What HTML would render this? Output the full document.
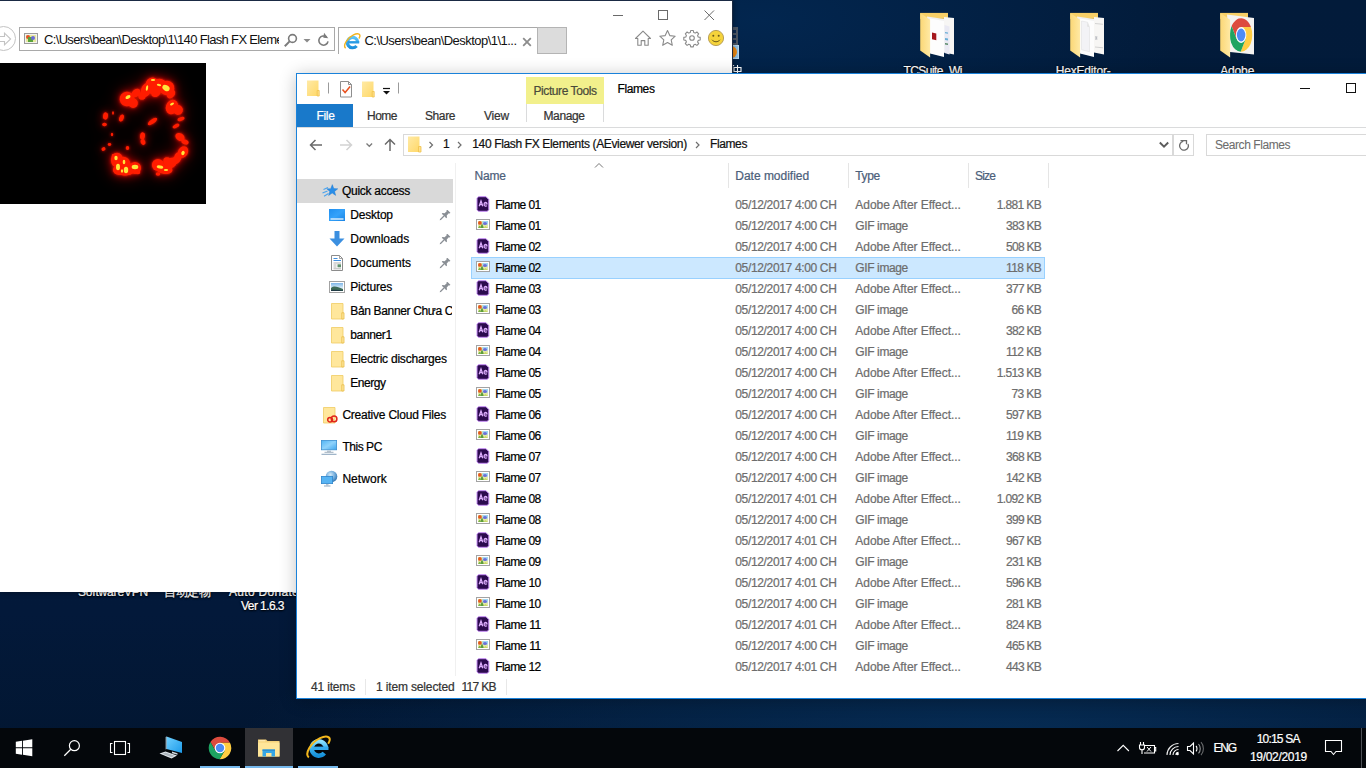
<!DOCTYPE html>
<html><head>
<meta charset="utf-8">
<title>Desktop</title>
<style>
*{box-sizing:border-box;margin:0;padding:0}
html,body{width:1366px;height:768px;overflow:hidden}
body{font-family:"Liberation Sans",sans-serif;font-size:12px;color:#000;position:relative;
 background:#05193a;}
.abs{position:absolute}
.t{position:absolute;white-space:nowrap;line-height:14px;height:14px;-webkit-text-stroke:.22px currentColor}
#desk{position:absolute;left:0;top:0;width:1366px;height:768px;
 background:
  radial-gradient(ellipse 420px 160px at 760px 20px,#02264f 0%,rgba(2,38,79,0) 100%),
  radial-gradient(ellipse 760px 130px at 1000px 735px,#062c54 0%,rgba(6,44,84,0) 100%),
  linear-gradient(180deg,#021b3a 0%,#031b3b 40%,#03193a 80%,#021630 100%);}
/* IE window */
#ie{position:absolute;left:0;top:0;width:733px;height:592px;background:#fff;border-top:1px solid #1a2a44;border-right:1px solid #1c2b42;box-shadow:0 0 6px rgba(0,0,0,.4)}
/* Explorer */
#ex{position:absolute;left:296px;top:73px;width:1080px;height:626px;background:#fff;border:1px solid #1a82da;
 box-shadow:0 2px 16px rgba(0,0,0,.24)}
/* taskbar */
#tb{position:absolute;left:0;top:728px;width:1366px;height:40px;background:#04070b}
.dl{color:#fff;text-shadow:0 1px 2px #000,0 0 2px #000}
</style>
</head>
<body>
<div id="desk">
 <div class="abs" style="left:732px;top:27px;width:6px;height:18px;background:#4d5866"></div>
 <div class="abs" style="left:732px;top:30px;width:4px;height:3px;background:#0b2a52"></div><div class="abs" style="left:732px;top:35px;width:4px;height:3px;background:#0b2a52"></div><div class="abs" style="left:732px;top:40px;width:4px;height:3px;background:#0b2a52"></div>
 <div class="abs" style="left:732px;top:45px;width:7px;height:14px;background:#8fc1e6;border:1px solid #b4d6ef;border-left:0"></div>
 <div class="abs" style="left:725px;top:46px;width:12px;height:12px;border-radius:50%;background:#ee8a12"></div>
 <div class="abs" style="left:733px;top:65px;width:9px;height:8px;overflow:hidden"><svg width="9" height="12" viewBox="0 0 9 12"><path d="M1 2.500h7v4H1zM4.500 0v11M0 1l1-1" fill="none" stroke="#fff" stroke-width="1.100"></path></svg></div>
<svg class="abs" style="left:920px;top:12px" width="36" height="48" viewBox="0 0 36 48">
     <defs><linearGradient id="dftc" x1="0" y1="0" x2="1" y2="0"><stop offset="0" stop-color="#fbd776"></stop><stop offset="1" stop-color="#ffe9a4"></stop></linearGradient></defs>
     <path d="M.200 .900H28v6H.200z" fill="#f7cf67"></path>
     <path d="M7 4.500L24 7v36.500L10 40z" fill="#f1f1f1"></path><path d="M24 5l10 1v36.500L24 40.500z" fill="#f7f6f4"></path><path d="M24.500 13l5 1.500v28l-5-1.500z" fill="#e9e9f3"></path><path d="M25 20l3 .6v1.200l-3-.600zM25 26l3 .6v2l-3-.600z" fill="#6aaed6"></path><path d="M25 31l3 .6v1.500l-3-.600z" fill="#5a8a6a"></path>
        <path d="M10 6.500L24 9v36L10 41.500z" fill="#fdfdfd"></path><path d="M12 20.500l4.300 1v6.800l-4.300-1z" fill="#a5171c"></path>
     <path d="M.200 .900L10.100 7.800v37.600L.200 38.500z" fill="url(#dftc)"></path></svg><svg class="abs" style="left:1070px;top:12px" width="36" height="48" viewBox="0 0 36 48">
     <defs><linearGradient id="dfhex" x1="0" y1="0" x2="1" y2="0"><stop offset="0" stop-color="#fbd776"></stop><stop offset="1" stop-color="#ffe9a4"></stop></linearGradient></defs>
     <path d="M.200 .900H28v6H.200z" fill="#f7cf67"></path>
     <path d="M7 4.500L24 7v36.500L10 40z" fill="#f1f1f1"></path><path d="M24 5l10 1v36.500L24 40.500z" fill="#f7f6f4"></path><path d="M25 11.500l8 .800M25 35l8 .800" stroke="#c9c9c9" stroke-width=".8" fill="none"></path><path d="M25.500 24l1.500 4M27 24l-1.500 4M25 26h2.500" stroke="#b5b8bd" stroke-width=".7" fill="none"></path>
        <path d="M10 6.500L24 9v36L10 41.500z" fill="#fdfdfd"></path><path d="M11.500 9l6 1.200 2 5v24.500l-8-2z" fill="#f3f3f6" stroke="#dcdcdc" stroke-width=".5"></path><path d="M17.500 10.200l-.500 4.300 2.500 .700z" fill="#e3e3e3"></path>
     <path d="M.200 .900L10.100 7.800v37.600L.200 38.500z" fill="url(#dfhex)"></path></svg><svg class="abs" style="left:1220px;top:12px" width="36" height="48" viewBox="0 0 36 48">
     <defs><linearGradient id="dfch" x1="0" y1="0" x2="1" y2="0"><stop offset="0" stop-color="#fbd776"></stop><stop offset="1" stop-color="#ffe9a4"></stop></linearGradient></defs>
     <path d="M.200 .900H28v6H.200z" fill="#f7cf67"></path>
     <path d="M7 2.500L34 6v36.500L10 40z" fill="#f4f3f1"></path>
        <g transform="translate(21.100 23) scale(.99 1.490)"><circle r="11.300" fill="#fff"></circle>
        <path d="M0 -5.300L9.980 -5.300A11.300 11.300 0 0 0 -9.580 -5.990L-4.590 2.650L0 0Z" fill="#dd4b3e"></path>
        <path d="M4.590 2.650L-.400 11.290A11.300 11.300 0 0 0 9.980 -5.300L0 -5.300L0 0Z" fill="#ffcd42"></path>
        <path d="M-4.590 2.650L-9.580 -5.990A11.300 11.300 0 0 0 -.400 11.290L4.590 2.650L0 0Z" fill="#1da462"></path>
        <circle r="5.300" fill="#fff"></circle><circle r="4.300" fill="#4c8bf5"></circle></g>
     <path d="M.200 .900L10.100 7.800v37.600L.200 38.500z" fill="url(#dfch)"></path></svg>
 <div class="t dl" style="left: 903.4px; top: 64px; letter-spacing: -0.542px;">TCSuite_Wi</div>
 <div class="t dl" style="left: 1055.8px; top: 64px; letter-spacing: -0.199px;">HexEditor-</div>
 <div class="t dl" style="left: 1220.2px; top: 64px; letter-spacing: -0.141px;">Adobe</div>
 <div class="t dl" style="left: 78px; top: 584.5px; letter-spacing: -0.185px;">SoftwareVPN</div>
 <div class="t dl" style="left: 164px; top: 584.5px; letter-spacing: -0.5px;">自动定物</div>
 <div class="t dl" style="left: 229px; top: 584.5px; letter-spacing: 0.298px;">Auto Donate</div>
 <div class="t dl" style="left: 241px; top: 598.6px; letter-spacing: -0.561px;">Ver 1.6.3</div>
</div>

<!-- IE WINDOW -->
<div id="ie">
 <!-- window controls -->
 <svg class="abs" style="left:600px;top:-1px" width="132" height="30" viewBox="0 0 132 30">
  <g fill="none" stroke="#6a6a6a" stroke-width="1">
   <path d="M13 15.5h10"></path>
   <rect x="58.5" y="10.5" width="9" height="9"></rect>
   <path d="M104.5 10.5l9.5 9.5M114 10.5l-9.5 9.5"></path>
  </g>
 </svg>
 <!-- fwd button -->
 <div class="abs" style="left:-9px;top:25px;width:25px;height:25px;border:1px solid #c3c3c3;border-radius:50%"></div>
 <svg class="abs" style="left:0;top:31px" width="12" height="14" viewBox="0 0 12 14"><path d="M-2 4.5h6.5V1.2L10.6 7 4.5 12.8V9.5H-2" fill="none" stroke="#c3c3c3" stroke-width="1.1"></path></svg>
 <!-- address box -->
 <div class="abs" style="left:19px;top:26px;width:316px;height:24px;border:1px solid #a9a9a9;background:#fff"></div>
 <div class="abs" style="left:24px;top:32px;width:14px;height:11px;border:1px solid #9a9a9a;background:#f4f4f0;overflow:hidden">
   <div class="abs" style="left:1px;top:1px;width:10px;height:7px;background:#e8e8a0"></div>
   <div class="abs" style="left:1px;top:1px;width:4px;height:4px;border-radius:50%;background:#e2522a"></div>
   <div class="abs" style="left:3px;top:3px;width:5px;height:5px;background:#5aa33c"></div>
   <div class="abs" style="left:6px;top:2px;width:4px;height:4px;border-radius:50%;background:#6a6bd8"></div>
 </div>
 <div class="t" id="ieurl" style="-webkit-text-stroke:0;left:44px;top:31px;width:235px;overflow:hidden;letter-spacing:-0.66px;font-size:13px;line-height:16px;height:16px;color:#111">C:\Users\bean\Desktop\1\140 Flash FX Elements</div>
 <svg class="abs" style="left:283px;top:31px" width="50" height="16" viewBox="0 0 50 16">
  <circle cx="9.5" cy="6.5" r="3.9" fill="none" stroke="#7b7b7b" stroke-width="1.6"></circle>
  <path d="M6.6 9.4L1.8 14.2" stroke="#7b7b7b" stroke-width="2" fill="none"></path>
  <path d="M20.5 7h7l-3.5 3.5z" fill="#8a8a8a"></path>
  <path d="M43.6 5.2A4.6 4.6 0 1 0 45 9.3" fill="none" stroke="#7b7b7b" stroke-width="1.6"></path>
  <path d="M40.6 1v5h5z" fill="#7b7b7b" transform="rotate(8 43 4)"></path>
 </svg>
 <!-- tab -->
 <div class="abs" style="left:338px;top:26px;width:200px;height:27px;border:1px solid #a9a9a9;border-bottom:0;border-right:0;background:#fff"></div>
 <div class="abs" style="left:537px;top:26px;width:30px;height:27px;border:1px solid #b4b4b4;background:#dcdcdc"></div>
 <svg class="abs" style="left:343px;top:31px" width="18" height="18" viewBox="0 0 18 18"><defs><linearGradient id="ie1" x1="0" y1="0" x2="0" y2="1"><stop offset="0" stop-color="#5cc4f6"></stop><stop offset="1" stop-color="#1b8fdc"></stop></linearGradient></defs>
  <path d="M14.800 10.300A5.200 5.200 0 1 0 13.600 13.900" fill="none" stroke="url(#ie1)" stroke-width="3.200"></path><path d="M4.600 10.300h11.600" stroke="#2a9be4" stroke-width="2.400" fill="none"></path>
  <path d="M2.600 16.200C-.500 13.500 4.500 5.500 10.500 2.800 14.500 1 17.300 1.800 16.900 4.200c-.100.800-.500 1.600-1 2.300" fill="none" stroke="#f3b31c" stroke-width="1.400"></path></svg>
 <div class="t" id="ietab" style="-webkit-text-stroke: 0px; left: 364.5px; top: 32px; font-size: 13px; line-height: 16px; height: 16px; color: rgb(17, 17, 17); letter-spacing: -0.533px;">C:\Users\bean\Desktop\1\1...</div>
 <svg class="abs" style="left:522px;top:36px" width="10" height="10" viewBox="0 0 10 10"><path d="M1.200 1.200l7.600 7.600M8.800 1.200L1.200 8.800" stroke="#8c8c8c" stroke-width="1.800" fill="none"></path></svg>
 <!-- right icons -->
 <svg class="abs" style="left:632px;top:27px" width="96" height="20" viewBox="0 0 96 20">
  <g fill="none" stroke="#8a8a8a" stroke-width="1.100" stroke-linejoin="round">
   <path d="M3.500 10.500L11 3.200l7.500 7.300h-2.300v6.700h-3.400v-4.600H9.200v4.600H5.800v-6.700z"></path>
   <path d="M35.500 2.600l2.300 5 5.400.6-4 3.700 1.100 5.400-4.800-2.700-4.800 2.700 1.100-5.400-4-3.700 5.400-.6z"></path>
   <circle cx="60" cy="10" r="2.300"></circle>
   <path d="M58.700 2.500h2.600l.4 2 1.500.6 1.700-1.100 1.800 1.800-1.100 1.700.6 1.500 2 .4v2.600l-2 .4-.6 1.500 1.100 1.700-1.800 1.800-1.700-1.100-1.500.6-.4 2h-2.600l-.4-2-1.500-.6-1.700 1.100-1.800-1.800 1.100-1.700-.6-1.500-2-.4v-2.600l2-.4.6-1.500-1.100-1.700 1.800-1.800 1.700 1.100 1.500-.6z"></path>
  </g>
  <circle cx="84" cy="10" r="7.600" fill="#f5d33b" stroke="#b9a05a" stroke-width="1"></circle>
  <circle cx="81.300" cy="7.800" r="1" fill="#6b5a1a"></circle><circle cx="86.700" cy="7.800" r="1" fill="#6b5a1a"></circle>
  <path d="M80 11.800c2 2.600 6 2.600 8 0" fill="none" stroke="#6b5a1a" stroke-width="1"></path>
 </svg>
 <!-- image -->
 <div class="abs" id="flame" style="left:0;top:62px;width:206px;height:141px;background:#000;overflow:hidden"><svg class="abs" style="left:0;top:0" width="206" height="141" viewBox="0 0 206 141">
<defs><filter id="b1" x="-50%" y="-50%" width="200%" height="200%"><feGaussianBlur stdDeviation="4"></feGaussianBlur></filter><filter id="b2" x="-50%" y="-50%" width="200%" height="200%"><feGaussianBlur stdDeviation="1.800"></feGaussianBlur></filter><filter id="b0" x="-50%" y="-50%" width="200%" height="200%"><feGaussianBlur stdDeviation="9"></feGaussianBlur></filter><filter id="b3"><feGaussianBlur stdDeviation=".45"></feGaussianBlur></filter></defs>
<g filter="url(#b0)" opacity=".55"><ellipse cx="127" cy="36" rx="7.32" ry="7.32" fill="#c80a00" transform="rotate(-30 127 36)"></ellipse><ellipse cx="133" cy="40" rx="4.88" ry="4.88" fill="#c80a00" transform="rotate(20 133 40)"></ellipse><ellipse cx="136" cy="30" rx="4.88" ry="3.66" fill="#c80a00" transform="rotate(-40 136 30)"></ellipse><ellipse cx="146" cy="27" rx="4.88" ry="7.32" fill="#c80a00" transform="rotate(20 146 27)"></ellipse><ellipse cx="153" cy="23" rx="7.32" ry="8.54" fill="#c80a00" transform="rotate(-20 153 23)"></ellipse><ellipse cx="160" cy="22" rx="7.32" ry="6.10" fill="#c80a00" transform="rotate(10 160 22)"></ellipse><ellipse cx="167" cy="25" rx="7.32" ry="7.32" fill="#c80a00" transform="rotate(30 167 25)"></ellipse><ellipse cx="171" cy="31" rx="3.66" ry="4.88" fill="#c80a00" transform="rotate(40 171 31)"></ellipse><ellipse cx="156" cy="30" rx="4.88" ry="3.66" fill="#c80a00" transform="rotate(-30 156 30)"></ellipse><ellipse cx="142" cy="33" rx="3.66" ry="3.66" fill="#c80a00" transform="rotate(0 142 33)"></ellipse><ellipse cx="172" cy="44" rx="6.10" ry="7.32" fill="#c80a00" transform="rotate(20 172 44)"></ellipse><ellipse cx="178" cy="47" rx="4.88" ry="4.88" fill="#c80a00" transform="rotate(40 178 47)"></ellipse><ellipse cx="181" cy="56" rx="3.66" ry="1.83" fill="#c80a00" transform="rotate(-20 181 56)"></ellipse><ellipse cx="176" cy="63" rx="3.66" ry="1.83" fill="#c80a00" transform="rotate(-30 176 63)"></ellipse><ellipse cx="180" cy="74" rx="4.88" ry="3.66" fill="#c80a00" transform="rotate(30 180 74)"></ellipse><ellipse cx="185" cy="79" rx="3.66" ry="2.44" fill="#c80a00" transform="rotate(20 185 79)"></ellipse><ellipse cx="183" cy="89" rx="4.88" ry="6.10" fill="#c80a00" transform="rotate(30 183 89)"></ellipse><ellipse cx="178" cy="94" rx="3.66" ry="4.88" fill="#c80a00" transform="rotate(20 178 94)"></ellipse><ellipse cx="158" cy="102" rx="6.10" ry="6.10" fill="#c80a00" transform="rotate(0 158 102)"></ellipse><ellipse cx="164" cy="106" rx="8.54" ry="4.88" fill="#c80a00" transform="rotate(10 164 106)"></ellipse><ellipse cx="171" cy="100" rx="6.10" ry="4.88" fill="#c80a00" transform="rotate(-30 171 100)"></ellipse><ellipse cx="176" cy="97" rx="4.88" ry="3.66" fill="#c80a00" transform="rotate(-30 176 97)"></ellipse><ellipse cx="158" cy="111" rx="2.30" ry="1.72" fill="#c80a00" transform="rotate(0 158 111)"></ellipse><ellipse cx="167" cy="98" rx="3.66" ry="3.66" fill="#c80a00" transform="rotate(0 167 98)"></ellipse><ellipse cx="117" cy="97" rx="6.10" ry="7.32" fill="#c80a00" transform="rotate(0 117 97)"></ellipse><ellipse cx="123" cy="101" rx="7.32" ry="7.32" fill="#c80a00" transform="rotate(0 123 101)"></ellipse><ellipse cx="128" cy="106" rx="7.32" ry="6.10" fill="#c80a00" transform="rotate(0 128 106)"></ellipse><ellipse cx="135" cy="105" rx="6.10" ry="6.10" fill="#c80a00" transform="rotate(0 135 105)"></ellipse><ellipse cx="119" cy="107" rx="6.10" ry="4.88" fill="#c80a00" transform="rotate(0 119 107)"></ellipse><ellipse cx="125" cy="109" rx="7.32" ry="3.66" fill="#c80a00" transform="rotate(0 125 109)"></ellipse><ellipse cx="138" cy="109" rx="2.30" ry="2.30" fill="#c80a00" transform="rotate(0 138 109)"></ellipse><ellipse cx="114" cy="93" rx="2.30" ry="2.30" fill="#c80a00" transform="rotate(0 114 93)"></ellipse><ellipse cx="105.5" cy="53" rx="2.44" ry="3.66" fill="#c80a00" transform="rotate(10 105.5 53)"></ellipse><ellipse cx="104.5" cy="61.5" rx="2.30" ry="1.72" fill="#c80a00" transform="rotate(0 104.5 61.5)"></ellipse><ellipse cx="112" cy="71.5" rx="1.15" ry="1.72" fill="#c80a00" transform="rotate(0 112 71.5)"></ellipse><ellipse cx="109.5" cy="81.5" rx="1.72" ry="1.38" fill="#c80a00" transform="rotate(0 109.5 81.5)"></ellipse><ellipse cx="103.5" cy="86" rx="2.07" ry="1.72" fill="#c80a00" transform="rotate(-30 103.5 86)"></ellipse><ellipse cx="121.5" cy="55" rx="2.20" ry="3.66" fill="#c80a00" transform="rotate(20 121.5 55)"></ellipse><ellipse cx="127.5" cy="85" rx="1.72" ry="2.07" fill="#c80a00" transform="rotate(0 127.5 85)"></ellipse><ellipse cx="113" cy="50" rx="0.92" ry="1.72" fill="#c80a00" transform="rotate(0 113 50)"></ellipse><ellipse cx="152.5" cy="58.5" rx="5.49" ry="2.20" fill="#c80a00" transform="rotate(-35 152.5 58.5)"></ellipse><ellipse cx="142.5" cy="73" rx="2.44" ry="3.66" fill="#c80a00" transform="rotate(10 142.5 73)"></ellipse><ellipse cx="143" cy="79" rx="2.30" ry="2.88" fill="#c80a00" transform="rotate(-20 143 79)"></ellipse></g><g filter="url(#b1)" opacity=".95"><ellipse cx="127" cy="36" rx="7.32" ry="7.32" fill="#c80a00" transform="rotate(-30 127 36)"></ellipse><ellipse cx="133" cy="40" rx="4.88" ry="4.88" fill="#c80a00" transform="rotate(20 133 40)"></ellipse><ellipse cx="136" cy="30" rx="4.88" ry="3.66" fill="#c80a00" transform="rotate(-40 136 30)"></ellipse><ellipse cx="146" cy="27" rx="4.88" ry="7.32" fill="#c80a00" transform="rotate(20 146 27)"></ellipse><ellipse cx="153" cy="23" rx="7.32" ry="8.54" fill="#c80a00" transform="rotate(-20 153 23)"></ellipse><ellipse cx="160" cy="22" rx="7.32" ry="6.10" fill="#c80a00" transform="rotate(10 160 22)"></ellipse><ellipse cx="167" cy="25" rx="7.32" ry="7.32" fill="#c80a00" transform="rotate(30 167 25)"></ellipse><ellipse cx="171" cy="31" rx="3.66" ry="4.88" fill="#c80a00" transform="rotate(40 171 31)"></ellipse><ellipse cx="156" cy="30" rx="4.88" ry="3.66" fill="#c80a00" transform="rotate(-30 156 30)"></ellipse><ellipse cx="142" cy="33" rx="3.66" ry="3.66" fill="#c80a00" transform="rotate(0 142 33)"></ellipse><ellipse cx="172" cy="44" rx="6.10" ry="7.32" fill="#c80a00" transform="rotate(20 172 44)"></ellipse><ellipse cx="178" cy="47" rx="4.88" ry="4.88" fill="#c80a00" transform="rotate(40 178 47)"></ellipse><ellipse cx="181" cy="56" rx="3.66" ry="1.83" fill="#c80a00" transform="rotate(-20 181 56)"></ellipse><ellipse cx="176" cy="63" rx="3.66" ry="1.83" fill="#c80a00" transform="rotate(-30 176 63)"></ellipse><ellipse cx="180" cy="74" rx="4.88" ry="3.66" fill="#c80a00" transform="rotate(30 180 74)"></ellipse><ellipse cx="185" cy="79" rx="3.66" ry="2.44" fill="#c80a00" transform="rotate(20 185 79)"></ellipse><ellipse cx="183" cy="89" rx="4.88" ry="6.10" fill="#c80a00" transform="rotate(30 183 89)"></ellipse><ellipse cx="178" cy="94" rx="3.66" ry="4.88" fill="#c80a00" transform="rotate(20 178 94)"></ellipse><ellipse cx="158" cy="102" rx="6.10" ry="6.10" fill="#c80a00" transform="rotate(0 158 102)"></ellipse><ellipse cx="164" cy="106" rx="8.54" ry="4.88" fill="#c80a00" transform="rotate(10 164 106)"></ellipse><ellipse cx="171" cy="100" rx="6.10" ry="4.88" fill="#c80a00" transform="rotate(-30 171 100)"></ellipse><ellipse cx="176" cy="97" rx="4.88" ry="3.66" fill="#c80a00" transform="rotate(-30 176 97)"></ellipse><ellipse cx="158" cy="111" rx="2.30" ry="1.72" fill="#c80a00" transform="rotate(0 158 111)"></ellipse><ellipse cx="167" cy="98" rx="3.66" ry="3.66" fill="#c80a00" transform="rotate(0 167 98)"></ellipse><ellipse cx="117" cy="97" rx="6.10" ry="7.32" fill="#c80a00" transform="rotate(0 117 97)"></ellipse><ellipse cx="123" cy="101" rx="7.32" ry="7.32" fill="#c80a00" transform="rotate(0 123 101)"></ellipse><ellipse cx="128" cy="106" rx="7.32" ry="6.10" fill="#c80a00" transform="rotate(0 128 106)"></ellipse><ellipse cx="135" cy="105" rx="6.10" ry="6.10" fill="#c80a00" transform="rotate(0 135 105)"></ellipse><ellipse cx="119" cy="107" rx="6.10" ry="4.88" fill="#c80a00" transform="rotate(0 119 107)"></ellipse><ellipse cx="125" cy="109" rx="7.32" ry="3.66" fill="#c80a00" transform="rotate(0 125 109)"></ellipse><ellipse cx="138" cy="109" rx="2.30" ry="2.30" fill="#c80a00" transform="rotate(0 138 109)"></ellipse><ellipse cx="114" cy="93" rx="2.30" ry="2.30" fill="#c80a00" transform="rotate(0 114 93)"></ellipse><ellipse cx="105.5" cy="53" rx="2.44" ry="3.66" fill="#c80a00" transform="rotate(10 105.5 53)"></ellipse><ellipse cx="104.5" cy="61.5" rx="2.30" ry="1.72" fill="#c80a00" transform="rotate(0 104.5 61.5)"></ellipse><ellipse cx="112" cy="71.5" rx="1.15" ry="1.72" fill="#c80a00" transform="rotate(0 112 71.5)"></ellipse><ellipse cx="109.5" cy="81.5" rx="1.72" ry="1.38" fill="#c80a00" transform="rotate(0 109.5 81.5)"></ellipse><ellipse cx="103.5" cy="86" rx="2.07" ry="1.72" fill="#c80a00" transform="rotate(-30 103.5 86)"></ellipse><ellipse cx="121.5" cy="55" rx="2.20" ry="3.66" fill="#c80a00" transform="rotate(20 121.5 55)"></ellipse><ellipse cx="127.5" cy="85" rx="1.72" ry="2.07" fill="#c80a00" transform="rotate(0 127.5 85)"></ellipse><ellipse cx="113" cy="50" rx="0.92" ry="1.72" fill="#c80a00" transform="rotate(0 113 50)"></ellipse><ellipse cx="152.5" cy="58.5" rx="5.49" ry="2.20" fill="#c80a00" transform="rotate(-35 152.5 58.5)"></ellipse><ellipse cx="142.5" cy="73" rx="2.44" ry="3.66" fill="#c80a00" transform="rotate(10 142.5 73)"></ellipse><ellipse cx="143" cy="79" rx="2.30" ry="2.88" fill="#c80a00" transform="rotate(-20 143 79)"></ellipse></g>
<g filter="url(#b2)"><ellipse cx="127" cy="36" rx="7.32" ry="7.32" fill="#f01200" transform="rotate(-30 127 36)"></ellipse><ellipse cx="133" cy="40" rx="4.88" ry="4.88" fill="#f01200" transform="rotate(20 133 40)"></ellipse><ellipse cx="136" cy="30" rx="4.88" ry="3.66" fill="#f01200" transform="rotate(-40 136 30)"></ellipse><ellipse cx="146" cy="27" rx="4.88" ry="7.32" fill="#f01200" transform="rotate(20 146 27)"></ellipse><ellipse cx="153" cy="23" rx="7.32" ry="8.54" fill="#f01200" transform="rotate(-20 153 23)"></ellipse><ellipse cx="160" cy="22" rx="7.32" ry="6.10" fill="#f01200" transform="rotate(10 160 22)"></ellipse><ellipse cx="167" cy="25" rx="7.32" ry="7.32" fill="#f01200" transform="rotate(30 167 25)"></ellipse><ellipse cx="171" cy="31" rx="3.66" ry="4.88" fill="#f01200" transform="rotate(40 171 31)"></ellipse><ellipse cx="156" cy="30" rx="4.88" ry="3.66" fill="#f01200" transform="rotate(-30 156 30)"></ellipse><ellipse cx="142" cy="33" rx="3.66" ry="3.66" fill="#f01200" transform="rotate(0 142 33)"></ellipse><ellipse cx="172" cy="44" rx="6.10" ry="7.32" fill="#f01200" transform="rotate(20 172 44)"></ellipse><ellipse cx="178" cy="47" rx="4.88" ry="4.88" fill="#f01200" transform="rotate(40 178 47)"></ellipse><ellipse cx="181" cy="56" rx="3.66" ry="1.83" fill="#f01200" transform="rotate(-20 181 56)"></ellipse><ellipse cx="176" cy="63" rx="3.66" ry="1.83" fill="#f01200" transform="rotate(-30 176 63)"></ellipse><ellipse cx="180" cy="74" rx="4.88" ry="3.66" fill="#f01200" transform="rotate(30 180 74)"></ellipse><ellipse cx="185" cy="79" rx="3.66" ry="2.44" fill="#f01200" transform="rotate(20 185 79)"></ellipse><ellipse cx="183" cy="89" rx="4.88" ry="6.10" fill="#f01200" transform="rotate(30 183 89)"></ellipse><ellipse cx="178" cy="94" rx="3.66" ry="4.88" fill="#f01200" transform="rotate(20 178 94)"></ellipse><ellipse cx="158" cy="102" rx="6.10" ry="6.10" fill="#f01200" transform="rotate(0 158 102)"></ellipse><ellipse cx="164" cy="106" rx="8.54" ry="4.88" fill="#f01200" transform="rotate(10 164 106)"></ellipse><ellipse cx="171" cy="100" rx="6.10" ry="4.88" fill="#f01200" transform="rotate(-30 171 100)"></ellipse><ellipse cx="176" cy="97" rx="4.88" ry="3.66" fill="#f01200" transform="rotate(-30 176 97)"></ellipse><ellipse cx="158" cy="111" rx="2.30" ry="1.72" fill="#f01200" transform="rotate(0 158 111)"></ellipse><ellipse cx="167" cy="98" rx="3.66" ry="3.66" fill="#f01200" transform="rotate(0 167 98)"></ellipse><ellipse cx="117" cy="97" rx="6.10" ry="7.32" fill="#f01200" transform="rotate(0 117 97)"></ellipse><ellipse cx="123" cy="101" rx="7.32" ry="7.32" fill="#f01200" transform="rotate(0 123 101)"></ellipse><ellipse cx="128" cy="106" rx="7.32" ry="6.10" fill="#f01200" transform="rotate(0 128 106)"></ellipse><ellipse cx="135" cy="105" rx="6.10" ry="6.10" fill="#f01200" transform="rotate(0 135 105)"></ellipse><ellipse cx="119" cy="107" rx="6.10" ry="4.88" fill="#f01200" transform="rotate(0 119 107)"></ellipse><ellipse cx="125" cy="109" rx="7.32" ry="3.66" fill="#f01200" transform="rotate(0 125 109)"></ellipse><ellipse cx="138" cy="109" rx="2.30" ry="2.30" fill="#f01200" transform="rotate(0 138 109)"></ellipse><ellipse cx="114" cy="93" rx="2.30" ry="2.30" fill="#f01200" transform="rotate(0 114 93)"></ellipse><ellipse cx="105.5" cy="53" rx="2.44" ry="3.66" fill="#f01200" transform="rotate(10 105.5 53)"></ellipse><ellipse cx="104.5" cy="61.5" rx="2.30" ry="1.72" fill="#f01200" transform="rotate(0 104.5 61.5)"></ellipse><ellipse cx="112" cy="71.5" rx="1.15" ry="1.72" fill="#f01200" transform="rotate(0 112 71.5)"></ellipse><ellipse cx="109.5" cy="81.5" rx="1.72" ry="1.38" fill="#f01200" transform="rotate(0 109.5 81.5)"></ellipse><ellipse cx="103.5" cy="86" rx="2.07" ry="1.72" fill="#f01200" transform="rotate(-30 103.5 86)"></ellipse><ellipse cx="121.5" cy="55" rx="2.20" ry="3.66" fill="#f01200" transform="rotate(20 121.5 55)"></ellipse><ellipse cx="127.5" cy="85" rx="1.72" ry="2.07" fill="#f01200" transform="rotate(0 127.5 85)"></ellipse><ellipse cx="113" cy="50" rx="0.92" ry="1.72" fill="#f01200" transform="rotate(0 113 50)"></ellipse><ellipse cx="152.5" cy="58.5" rx="5.49" ry="2.20" fill="#f01200" transform="rotate(-35 152.5 58.5)"></ellipse><ellipse cx="142.5" cy="73" rx="2.44" ry="3.66" fill="#f01200" transform="rotate(10 142.5 73)"></ellipse><ellipse cx="143" cy="79" rx="2.30" ry="2.88" fill="#f01200" transform="rotate(-20 143 79)"></ellipse></g>
<g filter="url(#b3)"><ellipse cx="127" cy="36" rx="7.32" ry="7.32" fill="#ff1e05" transform="rotate(-30 127 36)"></ellipse><ellipse cx="133" cy="40" rx="4.88" ry="4.88" fill="#ff1e05" transform="rotate(20 133 40)"></ellipse><ellipse cx="136" cy="30" rx="4.88" ry="3.66" fill="#ff1e05" transform="rotate(-40 136 30)"></ellipse><ellipse cx="146" cy="27" rx="4.88" ry="7.32" fill="#ff1e05" transform="rotate(20 146 27)"></ellipse><ellipse cx="153" cy="23" rx="7.32" ry="8.54" fill="#ff1e05" transform="rotate(-20 153 23)"></ellipse><ellipse cx="160" cy="22" rx="7.32" ry="6.10" fill="#ff1e05" transform="rotate(10 160 22)"></ellipse><ellipse cx="167" cy="25" rx="7.32" ry="7.32" fill="#ff1e05" transform="rotate(30 167 25)"></ellipse><ellipse cx="171" cy="31" rx="3.66" ry="4.88" fill="#ff1e05" transform="rotate(40 171 31)"></ellipse><ellipse cx="156" cy="30" rx="4.88" ry="3.66" fill="#ff1e05" transform="rotate(-30 156 30)"></ellipse><ellipse cx="142" cy="33" rx="3.66" ry="3.66" fill="#ff1e05" transform="rotate(0 142 33)"></ellipse><ellipse cx="172" cy="44" rx="6.10" ry="7.32" fill="#ff1e05" transform="rotate(20 172 44)"></ellipse><ellipse cx="178" cy="47" rx="4.88" ry="4.88" fill="#ff1e05" transform="rotate(40 178 47)"></ellipse><ellipse cx="181" cy="56" rx="3.66" ry="1.83" fill="#ff1e05" transform="rotate(-20 181 56)"></ellipse><ellipse cx="176" cy="63" rx="3.66" ry="1.83" fill="#ff1e05" transform="rotate(-30 176 63)"></ellipse><ellipse cx="180" cy="74" rx="4.88" ry="3.66" fill="#ff1e05" transform="rotate(30 180 74)"></ellipse><ellipse cx="185" cy="79" rx="3.66" ry="2.44" fill="#ff1e05" transform="rotate(20 185 79)"></ellipse><ellipse cx="183" cy="89" rx="4.88" ry="6.10" fill="#ff1e05" transform="rotate(30 183 89)"></ellipse><ellipse cx="178" cy="94" rx="3.66" ry="4.88" fill="#ff1e05" transform="rotate(20 178 94)"></ellipse><ellipse cx="158" cy="102" rx="6.10" ry="6.10" fill="#ff1e05" transform="rotate(0 158 102)"></ellipse><ellipse cx="164" cy="106" rx="8.54" ry="4.88" fill="#ff1e05" transform="rotate(10 164 106)"></ellipse><ellipse cx="171" cy="100" rx="6.10" ry="4.88" fill="#ff1e05" transform="rotate(-30 171 100)"></ellipse><ellipse cx="176" cy="97" rx="4.88" ry="3.66" fill="#ff1e05" transform="rotate(-30 176 97)"></ellipse><ellipse cx="158" cy="111" rx="2.30" ry="1.72" fill="#ff1e05" transform="rotate(0 158 111)"></ellipse><ellipse cx="167" cy="98" rx="3.66" ry="3.66" fill="#ff1e05" transform="rotate(0 167 98)"></ellipse><ellipse cx="117" cy="97" rx="6.10" ry="7.32" fill="#ff1e05" transform="rotate(0 117 97)"></ellipse><ellipse cx="123" cy="101" rx="7.32" ry="7.32" fill="#ff1e05" transform="rotate(0 123 101)"></ellipse><ellipse cx="128" cy="106" rx="7.32" ry="6.10" fill="#ff1e05" transform="rotate(0 128 106)"></ellipse><ellipse cx="135" cy="105" rx="6.10" ry="6.10" fill="#ff1e05" transform="rotate(0 135 105)"></ellipse><ellipse cx="119" cy="107" rx="6.10" ry="4.88" fill="#ff1e05" transform="rotate(0 119 107)"></ellipse><ellipse cx="125" cy="109" rx="7.32" ry="3.66" fill="#ff1e05" transform="rotate(0 125 109)"></ellipse><ellipse cx="138" cy="109" rx="2.30" ry="2.30" fill="#ff1e05" transform="rotate(0 138 109)"></ellipse><ellipse cx="114" cy="93" rx="2.30" ry="2.30" fill="#ff1e05" transform="rotate(0 114 93)"></ellipse><ellipse cx="105.5" cy="53" rx="2.44" ry="3.66" fill="#ff1e05" transform="rotate(10 105.5 53)"></ellipse><ellipse cx="104.5" cy="61.5" rx="2.30" ry="1.72" fill="#ff1e05" transform="rotate(0 104.5 61.5)"></ellipse><ellipse cx="112" cy="71.5" rx="1.15" ry="1.72" fill="#ff1e05" transform="rotate(0 112 71.5)"></ellipse><ellipse cx="109.5" cy="81.5" rx="1.72" ry="1.38" fill="#ff1e05" transform="rotate(0 109.5 81.5)"></ellipse><ellipse cx="103.5" cy="86" rx="2.07" ry="1.72" fill="#ff1e05" transform="rotate(-30 103.5 86)"></ellipse><ellipse cx="121.5" cy="55" rx="2.20" ry="3.66" fill="#ff1e05" transform="rotate(20 121.5 55)"></ellipse><ellipse cx="127.5" cy="85" rx="1.72" ry="2.07" fill="#ff1e05" transform="rotate(0 127.5 85)"></ellipse><ellipse cx="113" cy="50" rx="0.92" ry="1.72" fill="#ff1e05" transform="rotate(0 113 50)"></ellipse><ellipse cx="152.5" cy="58.5" rx="5.49" ry="2.20" fill="#ff1e05" transform="rotate(-35 152.5 58.5)"></ellipse><ellipse cx="142.5" cy="73" rx="2.44" ry="3.66" fill="#ff1e05" transform="rotate(10 142.5 73)"></ellipse><ellipse cx="143" cy="79" rx="2.30" ry="2.88" fill="#ff1e05" transform="rotate(-20 143 79)"></ellipse></g>
<g filter="url(#b3)"><ellipse cx="128" cy="34" rx="2.75" ry="1.65" fill="#ffe63a" transform="rotate(-30 128 34)"></ellipse><ellipse cx="153" cy="17" rx="2.20" ry="1.10" fill="#ffe63a" transform="rotate(0 153 17)"></ellipse><ellipse cx="159" cy="22" rx="2.20" ry="1.10" fill="#ffe63a" transform="rotate(10 159 22)"></ellipse><ellipse cx="166" cy="25" rx="3.85" ry="2.75" fill="#ffe63a" transform="rotate(30 166 25)"></ellipse><ellipse cx="147" cy="25" rx="1.10" ry="2.75" fill="#ffe63a" transform="rotate(10 147 25)"></ellipse><ellipse cx="172" cy="41" rx="2.20" ry="1.10" fill="#ffe63a" transform="rotate(-30 172 41)"></ellipse><ellipse cx="183" cy="90" rx="1.65" ry="2.20" fill="#ffe63a" transform="rotate(20 183 90)"></ellipse><ellipse cx="160" cy="104" rx="3.30" ry="1.65" fill="#ffe63a" transform="rotate(10 160 104)"></ellipse><ellipse cx="166" cy="107" rx="2.20" ry="1.10" fill="#ffe63a" transform="rotate(0 166 107)"></ellipse><ellipse cx="116" cy="95" rx="1.65" ry="2.20" fill="#ffe63a" transform="rotate(0 116 95)"></ellipse><ellipse cx="118" cy="104" rx="1.98" ry="3.30" fill="#ffe63a" transform="rotate(0 118 104)"></ellipse><ellipse cx="124" cy="99" rx="1.32" ry="2.20" fill="#ffe63a" transform="rotate(0 124 99)"></ellipse><ellipse cx="126" cy="107" rx="2.20" ry="3.30" fill="#ffe63a" transform="rotate(0 126 107)"></ellipse><ellipse cx="135" cy="104" rx="3.30" ry="2.20" fill="#ffe63a" transform="rotate(0 135 104)"></ellipse><ellipse cx="122" cy="108" rx="1.10" ry="1.65" fill="#ffe63a" transform="rotate(0 122 108)"></ellipse></g>
</svg></div>
</div>

<!-- EXPLORER WINDOW -->
<div id="ex"><div class="abs" id="exi" style="left:-297px;top:-74px;width:1366px;height:768px">
 <!-- title bar quick-access icons -->
 <svg class="abs" style="left:304px;top:78px" width="100" height="22" viewBox="0 0 100 22">
  <defs><linearGradient id="fg" x1="0" y1="0" x2="1" y2="1"><stop offset="0" stop-color="#ffeaa6"></stop><stop offset="1" stop-color="#ffd868"></stop></linearGradient></defs>
  <path d="M3 2.500h11.500v15.500H3z" fill="url(#fg)"></path><path d="M13.200 12.500h2v5.500h-2z" fill="#ffe08a" stroke="#f0c24b" stroke-width=".8"></path>
  <path d="M24.500 4.500v11" stroke="#9a9a9a" stroke-width="1"></path>
  <path d="M36.500 3.500h8l3 3v12.500h-11z" fill="#fdfdfd" stroke="#8e8e8e" stroke-width="1"></path><path d="M44.500 3.500v3h3" fill="none" stroke="#8e8e8e" stroke-width="1"></path>
  <path d="M38.500 11.500l2.600 3 5-6" fill="none" stroke="#e8501e" stroke-width="1.500"></path>
  <path d="M58 3.500h11.500v15.500H58z" fill="url(#fg)"></path><path d="M68.200 13.500h2v5.500h-2z" fill="#ffe08a" stroke="#f0c24b" stroke-width=".8"></path>
  <path d="M79 10.500h7" stroke="#111" stroke-width="1.200"></path><path d="M79 13h7l-3.500 3.500z" fill="#111"></path>
  <path d="M94.500 4.500v11" stroke="#9a9a9a" stroke-width="1"></path>
 </svg>
 <!-- Picture tools -->
 <div class="abs" style="left:526px;top:77px;width:78px;height:27px;background:#f2f08c"></div>
 <div class="t" style="left: 533.5px; top: 84px; color: rgb(74, 74, 58); letter-spacing: -0.422px;">Picture Tools</div>
 <div class="t" style="left: 617.5px; top: 82px; color: rgb(0, 0, 0); letter-spacing: -0.391px;">Flames</div>
 <!-- window buttons -->
 <svg class="abs" style="left:1290px;top:78px" width="76" height="20" viewBox="0 0 76 20"><path d="M10 10.500h10" stroke="#111" stroke-width="1"></path><rect x="56.500" y="5.500" width="9" height="9" fill="none" stroke="#111" stroke-width="1"></rect></svg>
 <!-- ribbon tabs -->
 <div class="abs" style="left:297px;top:104px;width:56px;height:23px;background:#1979ca"></div>
 <div class="t" style="left: 316.5px; top: 109px; color: rgb(255, 255, 255); letter-spacing: -0.336px;">File</div>
 <div class="t" style="left: 367px; top: 109px; color: rgb(51, 51, 51); letter-spacing: -0.504px;">Home</div>
 <div class="t" style="left: 425px; top: 109px; color: rgb(51, 51, 51); letter-spacing: -0.406px;">Share</div>
 <div class="t" style="left: 484px; top: 109px; color: rgb(51, 51, 51); letter-spacing: -0.199px;">View</div>
 <div class="abs" style="left:526px;top:104px;width:78px;height:18px;border-left:1px solid #dadbdc;border-right:1px solid #dadbdc"></div>
 <div class="t" style="left: 543.5px; top: 109px; color: rgb(51, 51, 51); letter-spacing: -0.396px;">Manage</div>
 <div class="abs" style="left:297px;top:127px;width:1069px;height:1px;background:#dadbdc"></div>
 <!-- nav arrows -->
 <svg class="abs" style="left:306px;top:136px" width="94" height="18" viewBox="0 0 94 18">
  <g fill="none" stroke-width="1.500">
   <path d="M16 9H4.500M9.500 4L4.500 9l5 5" stroke="#6a6a6a"></path>
   <path d="M34 9h11.500M40.500 4l5 5-5 5" stroke="#d2d2d2"></path>
   <path d="M60.500 7.500l2.800 2.800 2.800-2.800" stroke="#7a7a7a" stroke-width="1.300"></path>
   <path d="M84 15V3.500M79 8.500l5-5 5 5" stroke="#6a6a6a"></path>
  </g>
 </svg>
 <!-- address box -->
 <div class="abs" style="left:403px;top:134px;width:770px;height:22px;border:1px solid #d9d9d9;background:#fff"></div>
 <svg class="abs" style="left:406px;top:135px" width="18" height="18" viewBox="0 0 18 18"><path d="M2 1.500h11.500v15.500H2z" fill="url(#fg)"></path><path d="M12.500 11.500h2.500v5.500h-2.500z" fill="#ffe08a" stroke="#f0c24b" stroke-width=".8"></path></svg>
 <svg class="abs" style="left:427px;top:139px" width="290" height="12" viewBox="0 0 290 12"><g fill="none" stroke="#6e6e6e" stroke-width="1.200"><path d="M2.500 3l3 3-3 3"></path><path d="M31 3l3 3-3 3"></path><path d="M269 3l3 3-3 3"></path></g></svg>
 <div class="t" style="left:443px;top:137px;color:#111">1</div>
 <div class="t" style="left: 472.3px; top: 137px; color: rgb(17, 17, 17); letter-spacing: -0.356px;">140 Flash FX Elements (AEviewer version)</div>
 <div class="t" style="left: 710px; top: 137px; color: rgb(17, 17, 17); letter-spacing: -0.391px;">Flames</div>
 <svg class="abs" style="left:1156px;top:138px" width="36" height="14" viewBox="0 0 36 14">
  <path d="M3.800 4.500l4.200 4.200 4.200-4.200" fill="none" stroke="#5c5c5c" stroke-width="1.900"></path>
  <path d="M31.990 5.940A4.400 4.400 0 1 1 27.240 3.470" fill="none" stroke="#6a6a6a" stroke-width="1.300"></path><path d="M24.500 2.700h6v3.600" fill="none" stroke="#6a6a6a" stroke-width="1.300"></path>
 </svg>
 <div class="abs" style="left:1173px;top:134px;width:21px;height:22px;border:1px solid #d9d9d9"></div>
 <div class="abs" style="left:1206px;top:134px;width:170px;height:22px;border:1px solid #d9d9d9"></div>
 <div class="t" style="left: 1215px; top: 138px; color: rgb(109, 109, 109); -webkit-text-stroke: 0.08px currentcolor; letter-spacing: -0.439px;">Search Flames</div>

 <div class="abs" style="left:455px;top:163px;width:1px;height:513px;background:#f0f0f0"></div>
 <div class="abs" style="left:297px;top:179px;width:156px;height:24px;background:#d9d9d9"></div>
 <svg class="abs" style="left:322px;top:184px" width="16" height="14" viewBox="0 0 16 14"><path d="M10.300.600l1.500 4 4 .200-3.200 2.600 1.100 4-3.500-2.300-3.600 2.400 1.200-4.100L4.700 4.800l4-.100z" fill="#2a8ee8" stroke="#1f7ad0" stroke-width=".4"></path><path d="M1.500 5.500l4.500-2M.500 9l5-2M2 12.300l4.500-2.800" stroke="#4aa3ee" stroke-width="1.100" fill="none"></path></svg>
 <div class="t" style="left: 342px; top: 184px; letter-spacing: -0.28px;">Quick access</div>
 <svg class="abs" style="left:329px;top:209px" width="16" height="12" viewBox="0 0 16 12"><defs><linearGradient id="dg" x1="0" y1="0" x2="1" y2="1"><stop offset="0" stop-color="#1f8ff0"></stop><stop offset=".5" stop-color="#34a2fa"></stop><stop offset="1" stop-color="#1a84e4"></stop></linearGradient></defs><rect width="16" height="12" fill="url(#dg)"></rect><path d="M1.500 10h13" stroke="#fff" stroke-width="1.200"></path></svg>
 <div class="t" style="left: 350.3px; top: 208px; letter-spacing: -0.219px;">Desktop</div>
 <svg class="abs" style="left:329px;top:231px" width="16" height="16" viewBox="0 0 16 16"><path d="M5.500 0h5v7.500h5L8 15.500.500 7.500h5z" fill="#3b8fe0"></path></svg>
 <div class="t" style="left: 350.3px; top: 232px; letter-spacing: -0.064px;">Downloads</div>
 <svg class="abs" style="left:330px;top:255px" width="14" height="16" viewBox="0 0 14 16"><path d="M1.500 .500h8l3 3v12h-11z" fill="#fff" stroke="#8c8c8c" stroke-width="1"></path><path d="M9.500 .500v3h3" fill="none" stroke="#8c8c8c" stroke-width=".8"></path><path d="M3.500 3.500h4M3.500 5.500h7.500" stroke="#3f8fe0" stroke-width="1"></path><path d="M3.500 8h7.500M3.500 10h3M3.500 12h3M3.500 13.800h7.500" stroke="#a0a0a0" stroke-width=".8"></path><rect x="7.500" y="9.300" width="3.500" height="3" fill="#5f8f6a"></rect></svg>
 <div class="t" style="left: 350.3px; top: 256px; letter-spacing: 0px;">Documents</div>
 <svg class="abs" style="left:329px;top:281px" width="16" height="12" viewBox="0 0 16 12"><defs><linearGradient id="pg" x1="0" y1="0" x2="0" y2="1"><stop offset="0" stop-color="#7db5e8"></stop><stop offset=".6" stop-color="#d9ecf8"></stop><stop offset="1" stop-color="#ffffff"></stop></linearGradient></defs><rect x=".500" y=".500" width="15" height="11" fill="#fff" stroke="#a2a2a2"></rect><rect x="2" y="2" width="12" height="8" fill="url(#pg)"></rect><path d="M2 7c3-2.500 6-1.500 12 1v2H2z" fill="#3d6a57"></path><path d="M2 9c4-.500 8 0 12 .500V10H2z" fill="#1f3a44"></path></svg>
 <div class="t" style="left: 350.3px; top: 280px; letter-spacing: -0.207px;">Pictures</div>
<svg class="abs" style="left:439px;top:210px" width="12" height="11" viewBox="0 0 12 11"><g transform="translate(6.800 4.200) rotate(45)" fill="#8a8f95"><path d="M-2.300 -4.200h4.600v1.100h-.800v3.300l1.700 1.300v1h-6.400v-1l1.700-1.300v-3.300h-.800z"></path><path d="M-.600 2.500h1.200v5l-.600 1.200-.600-1.200z"></path></g></svg><svg class="abs" style="left:439px;top:234px" width="12" height="11" viewBox="0 0 12 11"><g transform="translate(6.800 4.200) rotate(45)" fill="#8a8f95"><path d="M-2.300 -4.200h4.600v1.100h-.800v3.300l1.700 1.300v1h-6.400v-1l1.700-1.300v-3.300h-.800z"></path><path d="M-.600 2.500h1.200v5l-.600 1.200-.600-1.200z"></path></g></svg><svg class="abs" style="left:439px;top:258px" width="12" height="11" viewBox="0 0 12 11"><g transform="translate(6.800 4.200) rotate(45)" fill="#8a8f95"><path d="M-2.300 -4.200h4.600v1.100h-.800v3.300l1.700 1.300v1h-6.400v-1l1.700-1.300v-3.300h-.800z"></path><path d="M-.600 2.500h1.200v5l-.600 1.200-.600-1.200z"></path></g></svg><svg class="abs" style="left:439px;top:282px" width="12" height="11" viewBox="0 0 12 11"><g transform="translate(6.800 4.200) rotate(45)" fill="#8a8f95"><path d="M-2.300 -4.200h4.600v1.100h-.800v3.300l1.700 1.300v1h-6.400v-1l1.700-1.300v-3.300h-.800z"></path><path d="M-.600 2.500h1.200v5l-.600 1.200-.600-1.200z"></path></g></svg>
<svg class="abs" style="left:331px;top:303px" width="14" height="17" viewBox="0 0 14 17"><path d="M.5.500h11.500v15.500H.500z" fill="#ffe79c" stroke="#f0cb62" stroke-width=".8"></path><path d="M10.800 9.800h2.200v6.200h-2.200z" fill="#ffe79c" stroke="#e9bc48" stroke-width=".8"></path></svg>
 <div class="t" style="left:350.300px;top:304px;width:101.500px;overflow:hidden;letter-spacing:-.35px">Bản Banner Chưa Có</div>
<svg class="abs" style="left:331px;top:327px" width="14" height="17" viewBox="0 0 14 17"><path d="M.5.500h11.500v15.500H.500z" fill="#ffe79c" stroke="#f0cb62" stroke-width=".8"></path><path d="M10.800 9.800h2.200v6.200h-2.200z" fill="#ffe79c" stroke="#e9bc48" stroke-width=".8"></path></svg>
 <div class="t" style="left: 350.3px; top: 328px; letter-spacing: -0.364px;">banner1</div>
<svg class="abs" style="left:331px;top:351px" width="14" height="17" viewBox="0 0 14 17"><path d="M.5.500h11.500v15.500H.500z" fill="#ffe79c" stroke="#f0cb62" stroke-width=".8"></path><path d="M10.800 9.800h2.200v6.200h-2.200z" fill="#ffe79c" stroke="#e9bc48" stroke-width=".8"></path></svg>
 <div class="t" style="left: 350.3px; top: 352px; letter-spacing: -0.222px;">Electric discharges</div>
<svg class="abs" style="left:331px;top:375px" width="14" height="17" viewBox="0 0 14 17"><path d="M.5.500h11.500v15.500H.500z" fill="#ffe79c" stroke="#f0cb62" stroke-width=".8"></path><path d="M10.800 9.800h2.200v6.200h-2.200z" fill="#ffe79c" stroke="#e9bc48" stroke-width=".8"></path></svg>
 <div class="t" style="left: 350.3px; top: 376px; letter-spacing: -0.472px;">Energy</div>
 <svg class="abs" style="left:323px;top:407px" width="16" height="17" viewBox="0 0 16 17"><path d="M.500.500h11.500v15.500h-11.500z" fill="#ffe79c" stroke="#f0cb62" stroke-width=".8"></path><circle cx="7" cy="12.700" r="2.300" fill="none" stroke="#e1251b" stroke-width="1.500"></circle><circle cx="11.100" cy="11.900" r="2.800" fill="none" stroke="#e1251b" stroke-width="1.500"></circle><path d="M8.300 10.800l1.800 2.600" stroke="#e1251b" stroke-width="1.300"></path></svg>
 <div class="t" style="left: 342.4px; top: 408px; letter-spacing: -0.222px;">Creative Cloud Files</div>
 <svg class="abs" style="left:321px;top:440px" width="16" height="15" viewBox="0 0 16 15"><defs><linearGradient id="mg" x1="0" y1="0" x2="1" y2="1"><stop offset="0" stop-color="#4fb4f5"></stop><stop offset=".5" stop-color="#8fd2fb"></stop><stop offset="1" stop-color="#3ea6ee"></stop></linearGradient></defs><rect x=".400" y=".400" width="15.200" height="9.400" fill="url(#mg)" stroke="#3d8fd0" stroke-width=".8"></rect><path d="M6 10.500h4v1.500H6z" fill="#b8c4cf"></path><path d="M3.500 12.300h9" stroke="#9fb0bf" stroke-width="1"></path><path d="M.500 14.300h15" stroke="#8fa8c0" stroke-width="1.100"></path></svg>
 <div class="t" style="left: 342.4px; top: 440px; letter-spacing: -0.455px;">This PC</div>
 <svg class="abs" style="left:321px;top:470px" width="17" height="17" viewBox="0 0 17 17"><defs><radialGradient id="gg" cx=".4" cy=".35" r=".7"><stop offset="0" stop-color="#d6ecfa"></stop><stop offset=".6" stop-color="#6aa6d8"></stop><stop offset="1" stop-color="#2e6faa"></stop></radialGradient></defs><circle cx="10.500" cy="6.500" r="5.800" fill="url(#gg)"></circle><rect x=".400" y="6.400" width="11.200" height="7.200" fill="#57b4f3" stroke="#2f86cc" stroke-width=".8"></rect><path d="M5 14h2.500v1.500H5z" fill="#b8c4cf"></path><path d="M3 16h6.500" stroke="#8fa8c0" stroke-width="1"></path></svg>
 <div class="t" style="left: 342.4px; top: 472px; letter-spacing: 0.055px;">Network</div>


 <div class="t" style="left: 474.5px; top: 169px; color: rgb(76, 96, 122); letter-spacing: -0.179px;">Name</div>
 <svg class="abs" style="left:594px;top:162px" width="10" height="7" viewBox="0 0 10 7"><path d="M1 5.500l4-4 4 4" fill="none" stroke="#767676" stroke-width="1"></path></svg>
 <div class="t" style="left: 735.3px; top: 169px; color: rgb(76, 96, 122); letter-spacing: -0.019px;">Date modified</div>
 <div class="t" style="left: 855.3px; top: 169px; color: rgb(76, 96, 122); letter-spacing: -0.354px;">Type</div>
 <div class="t" style="left: 975px; top: 169px; color: rgb(76, 96, 122); letter-spacing: -0.836px;">Size</div>
 <div class="abs" style="left:728px;top:163px;width:1px;height:25px;background:#e5e5e5"></div>
 <div class="abs" style="left:848px;top:163px;width:1px;height:25px;background:#e5e5e5"></div>
 <div class="abs" style="left:968px;top:163px;width:1px;height:25px;background:#e5e5e5"></div>
 <div class="abs" style="left:1048px;top:163px;width:1px;height:25px;background:#e5e5e5"></div>
 <div class="abs" style="left:471px;top:257px;width:574px;height:22px;background:#cce8ff;border:1px solid #99d1ff"></div>
<svg class="abs" style="left:476px;top:196px" width="14" height="16" viewBox="0 0 14 16"><path d="M2.500.700h7.500l2.800 2.800v10.300l-1.500 1.500H2.500L1 13.800V2.200z" fill="#2c0b4f" stroke="#c58df5" stroke-width="1"></path><path d="M3.200 10.300l1.800-5.300 1.800 5.300M3.800 8.600h2.400" fill="none" stroke="#dfb0ff" stroke-width="1.250"></path><path d="M8 8h3c0-2.200-3-2.200-3 .200 0 2.300 2.200 2.300 3 1.400" fill="none" stroke="#dfb0ff" stroke-width="1.150"></path></svg><div class="t" style="left: 495.2px; top: 198px; letter-spacing: -0.566px;">Flame 01</div><div class="t" style="left: 735.3px; top: 198px; color: rgb(109, 109, 109); letter-spacing: -0.346px;">05/12/2017 4:00 CH</div><div class="t" style="left: 855.3px; top: 198px; color: rgb(109, 109, 109); letter-spacing: -0.048px;">Adobe After Effect...</div><div class="t sz" style="right: 324.9px; top: 198px; color: rgb(109, 109, 109); letter-spacing: -0.622px;">1.881 KB</div>
<svg class="abs" style="left:476px;top:219px" width="14" height="11" viewBox="0 0 14 11"><rect x=".500" y=".500" width="13" height="10" fill="#fff" stroke="#a3a3a3"></rect><rect x="2" y="2" width="10" height="7" fill="#e4e9a8"></rect><rect x="6.500" y="2" width="5.500" height="3.500" fill="#9fd4f2"></rect><circle cx="3.900" cy="3.900" r="1.900" fill="#e4581f"></circle><path d="M4 9l2-4.500 2 4.500z" fill="#5a9c3a"></path><path d="M2 9l1.500-2.500 2 2.500z" fill="#7db44a"></path><ellipse cx="9" cy="4.500" rx="2" ry="1.600" fill="#6c6fd6"></ellipse><path d="M7 9l2.500-2 2.500 2z" fill="#c7d86a"></path></svg><div class="t" style="left: 495.2px; top: 219px; letter-spacing: -0.566px;">Flame 01</div><div class="t" style="left: 735.3px; top: 219px; color: rgb(109, 109, 109); letter-spacing: -0.346px;">05/12/2017 4:00 CH</div><div class="t" style="left: 855.3px; top: 219px; color: rgb(109, 109, 109); letter-spacing: -0.38px;">GIF image</div><div class="t sz" style="right: 324.9px; top: 219px; color: rgb(109, 109, 109); letter-spacing: -0.696px;">383 KB</div>
<svg class="abs" style="left:476px;top:238px" width="14" height="16" viewBox="0 0 14 16"><path d="M2.500.700h7.500l2.800 2.800v10.300l-1.500 1.500H2.500L1 13.800V2.200z" fill="#2c0b4f" stroke="#c58df5" stroke-width="1"></path><path d="M3.200 10.300l1.800-5.300 1.800 5.300M3.800 8.600h2.400" fill="none" stroke="#dfb0ff" stroke-width="1.250"></path><path d="M8 8h3c0-2.200-3-2.200-3 .200 0 2.300 2.200 2.300 3 1.400" fill="none" stroke="#dfb0ff" stroke-width="1.150"></path></svg><div class="t" style="left: 495.2px; top: 240px; letter-spacing: -0.566px;">Flame 02</div><div class="t" style="left: 735.3px; top: 240px; color: rgb(109, 109, 109); letter-spacing: -0.346px;">05/12/2017 4:00 CH</div><div class="t" style="left: 855.3px; top: 240px; color: rgb(109, 109, 109); letter-spacing: -0.048px;">Adobe After Effect...</div><div class="t sz" style="right: 324.9px; top: 240px; color: rgb(109, 109, 109); letter-spacing: -0.696px;">508 KB</div>
<svg class="abs" style="left:476px;top:261px" width="14" height="11" viewBox="0 0 14 11"><rect x=".500" y=".500" width="13" height="10" fill="#fff" stroke="#a3a3a3"></rect><rect x="2" y="2" width="10" height="7" fill="#e4e9a8"></rect><rect x="6.500" y="2" width="5.500" height="3.500" fill="#9fd4f2"></rect><circle cx="3.900" cy="3.900" r="1.900" fill="#e4581f"></circle><path d="M4 9l2-4.500 2 4.500z" fill="#5a9c3a"></path><path d="M2 9l1.500-2.500 2 2.500z" fill="#7db44a"></path><ellipse cx="9" cy="4.500" rx="2" ry="1.600" fill="#6c6fd6"></ellipse><path d="M7 9l2.500-2 2.500 2z" fill="#c7d86a"></path></svg><div class="t" style="left: 495.2px; top: 261px; letter-spacing: -0.566px;">Flame 02</div><div class="t" style="left: 735.3px; top: 261px; color: rgb(109, 109, 109); letter-spacing: -0.346px;">05/12/2017 4:00 CH</div><div class="t" style="left: 855.3px; top: 261px; color: rgb(109, 109, 109); letter-spacing: -0.38px;">GIF image</div><div class="t sz" style="right: 324.9px; top: 261px; color: rgb(109, 109, 109); letter-spacing: -0.547px;">118 KB</div>
<svg class="abs" style="left:476px;top:280px" width="14" height="16" viewBox="0 0 14 16"><path d="M2.500.700h7.500l2.800 2.800v10.300l-1.500 1.500H2.500L1 13.800V2.200z" fill="#2c0b4f" stroke="#c58df5" stroke-width="1"></path><path d="M3.200 10.300l1.800-5.300 1.800 5.300M3.800 8.600h2.400" fill="none" stroke="#dfb0ff" stroke-width="1.250"></path><path d="M8 8h3c0-2.200-3-2.200-3 .200 0 2.300 2.200 2.300 3 1.400" fill="none" stroke="#dfb0ff" stroke-width="1.150"></path></svg><div class="t" style="left: 495.2px; top: 282px; letter-spacing: -0.566px;">Flame 03</div><div class="t" style="left: 735.3px; top: 282px; color: rgb(109, 109, 109); letter-spacing: -0.346px;">05/12/2017 4:00 CH</div><div class="t" style="left: 855.3px; top: 282px; color: rgb(109, 109, 109); letter-spacing: -0.048px;">Adobe After Effect...</div><div class="t sz" style="right: 324.9px; top: 282px; color: rgb(109, 109, 109); letter-spacing: -0.696px;">377 KB</div>
<svg class="abs" style="left:476px;top:303px" width="14" height="11" viewBox="0 0 14 11"><rect x=".500" y=".500" width="13" height="10" fill="#fff" stroke="#a3a3a3"></rect><rect x="2" y="2" width="10" height="7" fill="#e4e9a8"></rect><rect x="6.500" y="2" width="5.500" height="3.500" fill="#9fd4f2"></rect><circle cx="3.900" cy="3.900" r="1.900" fill="#e4581f"></circle><path d="M4 9l2-4.500 2 4.500z" fill="#5a9c3a"></path><path d="M2 9l1.500-2.500 2 2.500z" fill="#7db44a"></path><ellipse cx="9" cy="4.500" rx="2" ry="1.600" fill="#6c6fd6"></ellipse><path d="M7 9l2.500-2 2.500 2z" fill="#c7d86a"></path></svg><div class="t" style="left: 495.2px; top: 303px; letter-spacing: -0.566px;">Flame 03</div><div class="t" style="left: 735.3px; top: 303px; color: rgb(109, 109, 109); letter-spacing: -0.346px;">05/12/2017 4:00 CH</div><div class="t" style="left: 855.3px; top: 303px; color: rgb(109, 109, 109); letter-spacing: -0.38px;">GIF image</div><div class="t sz" style="right: 324.9px; top: 303px; color: rgb(109, 109, 109); letter-spacing: -0.601px;">66 KB</div>
<svg class="abs" style="left:476px;top:322px" width="14" height="16" viewBox="0 0 14 16"><path d="M2.500.700h7.500l2.800 2.800v10.300l-1.500 1.500H2.500L1 13.800V2.200z" fill="#2c0b4f" stroke="#c58df5" stroke-width="1"></path><path d="M3.200 10.300l1.800-5.300 1.800 5.300M3.800 8.600h2.400" fill="none" stroke="#dfb0ff" stroke-width="1.250"></path><path d="M8 8h3c0-2.200-3-2.200-3 .200 0 2.300 2.200 2.300 3 1.400" fill="none" stroke="#dfb0ff" stroke-width="1.150"></path></svg><div class="t" style="left: 495.2px; top: 324px; letter-spacing: -0.566px;">Flame 04</div><div class="t" style="left: 735.3px; top: 324px; color: rgb(109, 109, 109); letter-spacing: -0.346px;">05/12/2017 4:00 CH</div><div class="t" style="left: 855.3px; top: 324px; color: rgb(109, 109, 109); letter-spacing: -0.048px;">Adobe After Effect...</div><div class="t sz" style="right: 324.9px; top: 324px; color: rgb(109, 109, 109); letter-spacing: -0.696px;">382 KB</div>
<svg class="abs" style="left:476px;top:345px" width="14" height="11" viewBox="0 0 14 11"><rect x=".500" y=".500" width="13" height="10" fill="#fff" stroke="#a3a3a3"></rect><rect x="2" y="2" width="10" height="7" fill="#e4e9a8"></rect><rect x="6.500" y="2" width="5.500" height="3.500" fill="#9fd4f2"></rect><circle cx="3.900" cy="3.900" r="1.900" fill="#e4581f"></circle><path d="M4 9l2-4.500 2 4.500z" fill="#5a9c3a"></path><path d="M2 9l1.500-2.500 2 2.500z" fill="#7db44a"></path><ellipse cx="9" cy="4.500" rx="2" ry="1.600" fill="#6c6fd6"></ellipse><path d="M7 9l2.500-2 2.500 2z" fill="#c7d86a"></path></svg><div class="t" style="left: 495.2px; top: 345px; letter-spacing: -0.566px;">Flame 04</div><div class="t" style="left: 735.3px; top: 345px; color: rgb(109, 109, 109); letter-spacing: -0.346px;">05/12/2017 4:00 CH</div><div class="t" style="left: 855.3px; top: 345px; color: rgb(109, 109, 109); letter-spacing: -0.38px;">GIF image</div><div class="t sz" style="right: 324.9px; top: 345px; color: rgb(109, 109, 109); letter-spacing: -0.547px;">112 KB</div>
<svg class="abs" style="left:476px;top:364px" width="14" height="16" viewBox="0 0 14 16"><path d="M2.500.700h7.500l2.800 2.800v10.300l-1.500 1.500H2.500L1 13.800V2.200z" fill="#2c0b4f" stroke="#c58df5" stroke-width="1"></path><path d="M3.200 10.300l1.800-5.300 1.800 5.300M3.800 8.600h2.400" fill="none" stroke="#dfb0ff" stroke-width="1.250"></path><path d="M8 8h3c0-2.200-3-2.200-3 .200 0 2.300 2.200 2.300 3 1.400" fill="none" stroke="#dfb0ff" stroke-width="1.150"></path></svg><div class="t" style="left: 495.2px; top: 366px; letter-spacing: -0.566px;">Flame 05</div><div class="t" style="left: 735.3px; top: 366px; color: rgb(109, 109, 109); letter-spacing: -0.346px;">05/12/2017 4:00 CH</div><div class="t" style="left: 855.3px; top: 366px; color: rgb(109, 109, 109); letter-spacing: -0.048px;">Adobe After Effect...</div><div class="t sz" style="right: 324.9px; top: 366px; color: rgb(109, 109, 109); letter-spacing: -0.622px;">1.513 KB</div>
<svg class="abs" style="left:476px;top:387px" width="14" height="11" viewBox="0 0 14 11"><rect x=".500" y=".500" width="13" height="10" fill="#fff" stroke="#a3a3a3"></rect><rect x="2" y="2" width="10" height="7" fill="#e4e9a8"></rect><rect x="6.500" y="2" width="5.500" height="3.500" fill="#9fd4f2"></rect><circle cx="3.900" cy="3.900" r="1.900" fill="#e4581f"></circle><path d="M4 9l2-4.500 2 4.500z" fill="#5a9c3a"></path><path d="M2 9l1.500-2.500 2 2.500z" fill="#7db44a"></path><ellipse cx="9" cy="4.500" rx="2" ry="1.600" fill="#6c6fd6"></ellipse><path d="M7 9l2.500-2 2.500 2z" fill="#c7d86a"></path></svg><div class="t" style="left: 495.2px; top: 387px; letter-spacing: -0.566px;">Flame 05</div><div class="t" style="left: 735.3px; top: 387px; color: rgb(109, 109, 109); letter-spacing: -0.346px;">05/12/2017 4:00 CH</div><div class="t" style="left: 855.3px; top: 387px; color: rgb(109, 109, 109); letter-spacing: -0.38px;">GIF image</div><div class="t sz" style="right: 324.9px; top: 387px; color: rgb(109, 109, 109); letter-spacing: -0.601px;">73 KB</div>
<svg class="abs" style="left:476px;top:406px" width="14" height="16" viewBox="0 0 14 16"><path d="M2.500.700h7.500l2.800 2.800v10.300l-1.500 1.500H2.500L1 13.800V2.200z" fill="#2c0b4f" stroke="#c58df5" stroke-width="1"></path><path d="M3.200 10.300l1.800-5.300 1.800 5.300M3.800 8.600h2.400" fill="none" stroke="#dfb0ff" stroke-width="1.250"></path><path d="M8 8h3c0-2.200-3-2.200-3 .200 0 2.300 2.200 2.300 3 1.400" fill="none" stroke="#dfb0ff" stroke-width="1.150"></path></svg><div class="t" style="left: 495.2px; top: 408px; letter-spacing: -0.566px;">Flame 06</div><div class="t" style="left: 735.3px; top: 408px; color: rgb(109, 109, 109); letter-spacing: -0.346px;">05/12/2017 4:00 CH</div><div class="t" style="left: 855.3px; top: 408px; color: rgb(109, 109, 109); letter-spacing: -0.048px;">Adobe After Effect...</div><div class="t sz" style="right: 324.9px; top: 408px; color: rgb(109, 109, 109); letter-spacing: -0.696px;">597 KB</div>
<svg class="abs" style="left:476px;top:429px" width="14" height="11" viewBox="0 0 14 11"><rect x=".500" y=".500" width="13" height="10" fill="#fff" stroke="#a3a3a3"></rect><rect x="2" y="2" width="10" height="7" fill="#e4e9a8"></rect><rect x="6.500" y="2" width="5.500" height="3.500" fill="#9fd4f2"></rect><circle cx="3.900" cy="3.900" r="1.900" fill="#e4581f"></circle><path d="M4 9l2-4.500 2 4.500z" fill="#5a9c3a"></path><path d="M2 9l1.500-2.500 2 2.500z" fill="#7db44a"></path><ellipse cx="9" cy="4.500" rx="2" ry="1.600" fill="#6c6fd6"></ellipse><path d="M7 9l2.500-2 2.500 2z" fill="#c7d86a"></path></svg><div class="t" style="left: 495.2px; top: 429px; letter-spacing: -0.566px;">Flame 06</div><div class="t" style="left: 735.3px; top: 429px; color: rgb(109, 109, 109); letter-spacing: -0.346px;">05/12/2017 4:00 CH</div><div class="t" style="left: 855.3px; top: 429px; color: rgb(109, 109, 109); letter-spacing: -0.38px;">GIF image</div><div class="t sz" style="right: 324.9px; top: 429px; color: rgb(109, 109, 109); letter-spacing: -0.547px;">119 KB</div>
<svg class="abs" style="left:476px;top:448px" width="14" height="16" viewBox="0 0 14 16"><path d="M2.500.700h7.500l2.800 2.800v10.300l-1.500 1.500H2.500L1 13.800V2.200z" fill="#2c0b4f" stroke="#c58df5" stroke-width="1"></path><path d="M3.200 10.300l1.800-5.300 1.800 5.300M3.800 8.600h2.400" fill="none" stroke="#dfb0ff" stroke-width="1.250"></path><path d="M8 8h3c0-2.200-3-2.200-3 .200 0 2.300 2.200 2.300 3 1.400" fill="none" stroke="#dfb0ff" stroke-width="1.150"></path></svg><div class="t" style="left: 495.2px; top: 450px; letter-spacing: -0.566px;">Flame 07</div><div class="t" style="left: 735.3px; top: 450px; color: rgb(109, 109, 109); letter-spacing: -0.346px;">05/12/2017 4:00 CH</div><div class="t" style="left: 855.3px; top: 450px; color: rgb(109, 109, 109); letter-spacing: -0.048px;">Adobe After Effect...</div><div class="t sz" style="right: 324.9px; top: 450px; color: rgb(109, 109, 109); letter-spacing: -0.696px;">368 KB</div>
<svg class="abs" style="left:476px;top:471px" width="14" height="11" viewBox="0 0 14 11"><rect x=".500" y=".500" width="13" height="10" fill="#fff" stroke="#a3a3a3"></rect><rect x="2" y="2" width="10" height="7" fill="#e4e9a8"></rect><rect x="6.500" y="2" width="5.500" height="3.500" fill="#9fd4f2"></rect><circle cx="3.900" cy="3.900" r="1.900" fill="#e4581f"></circle><path d="M4 9l2-4.500 2 4.500z" fill="#5a9c3a"></path><path d="M2 9l1.500-2.500 2 2.500z" fill="#7db44a"></path><ellipse cx="9" cy="4.500" rx="2" ry="1.600" fill="#6c6fd6"></ellipse><path d="M7 9l2.500-2 2.500 2z" fill="#c7d86a"></path></svg><div class="t" style="left: 495.2px; top: 471px; letter-spacing: -0.566px;">Flame 07</div><div class="t" style="left: 735.3px; top: 471px; color: rgb(109, 109, 109); letter-spacing: -0.346px;">05/12/2017 4:00 CH</div><div class="t" style="left: 855.3px; top: 471px; color: rgb(109, 109, 109); letter-spacing: -0.38px;">GIF image</div><div class="t sz" style="right: 324.9px; top: 471px; color: rgb(109, 109, 109); letter-spacing: -0.696px;">142 KB</div>
<svg class="abs" style="left:476px;top:490px" width="14" height="16" viewBox="0 0 14 16"><path d="M2.500.700h7.500l2.800 2.800v10.300l-1.500 1.500H2.500L1 13.800V2.200z" fill="#2c0b4f" stroke="#c58df5" stroke-width="1"></path><path d="M3.200 10.300l1.800-5.300 1.800 5.300M3.800 8.600h2.400" fill="none" stroke="#dfb0ff" stroke-width="1.250"></path><path d="M8 8h3c0-2.200-3-2.200-3 .200 0 2.300 2.200 2.300 3 1.400" fill="none" stroke="#dfb0ff" stroke-width="1.150"></path></svg><div class="t" style="left: 495.2px; top: 492px; letter-spacing: -0.566px;">Flame 08</div><div class="t" style="left: 735.3px; top: 492px; color: rgb(109, 109, 109); letter-spacing: -0.346px;">05/12/2017 4:01 CH</div><div class="t" style="left: 855.3px; top: 492px; color: rgb(109, 109, 109); letter-spacing: -0.048px;">Adobe After Effect...</div><div class="t sz" style="right: 324.9px; top: 492px; color: rgb(109, 109, 109); letter-spacing: -0.622px;">1.092 KB</div>
<svg class="abs" style="left:476px;top:513px" width="14" height="11" viewBox="0 0 14 11"><rect x=".500" y=".500" width="13" height="10" fill="#fff" stroke="#a3a3a3"></rect><rect x="2" y="2" width="10" height="7" fill="#e4e9a8"></rect><rect x="6.500" y="2" width="5.500" height="3.500" fill="#9fd4f2"></rect><circle cx="3.900" cy="3.900" r="1.900" fill="#e4581f"></circle><path d="M4 9l2-4.500 2 4.500z" fill="#5a9c3a"></path><path d="M2 9l1.500-2.500 2 2.500z" fill="#7db44a"></path><ellipse cx="9" cy="4.500" rx="2" ry="1.600" fill="#6c6fd6"></ellipse><path d="M7 9l2.500-2 2.500 2z" fill="#c7d86a"></path></svg><div class="t" style="left: 495.2px; top: 513px; letter-spacing: -0.566px;">Flame 08</div><div class="t" style="left: 735.3px; top: 513px; color: rgb(109, 109, 109); letter-spacing: -0.346px;">05/12/2017 4:00 CH</div><div class="t" style="left: 855.3px; top: 513px; color: rgb(109, 109, 109); letter-spacing: -0.38px;">GIF image</div><div class="t sz" style="right: 324.9px; top: 513px; color: rgb(109, 109, 109); letter-spacing: -0.696px;">399 KB</div>
<svg class="abs" style="left:476px;top:532px" width="14" height="16" viewBox="0 0 14 16"><path d="M2.500.700h7.500l2.800 2.800v10.300l-1.500 1.500H2.500L1 13.800V2.200z" fill="#2c0b4f" stroke="#c58df5" stroke-width="1"></path><path d="M3.200 10.300l1.800-5.300 1.800 5.300M3.800 8.600h2.400" fill="none" stroke="#dfb0ff" stroke-width="1.250"></path><path d="M8 8h3c0-2.200-3-2.200-3 .200 0 2.300 2.200 2.300 3 1.400" fill="none" stroke="#dfb0ff" stroke-width="1.150"></path></svg><div class="t" style="left: 495.2px; top: 534px; letter-spacing: -0.566px;">Flame 09</div><div class="t" style="left: 735.3px; top: 534px; color: rgb(109, 109, 109); letter-spacing: -0.346px;">05/12/2017 4:01 CH</div><div class="t" style="left: 855.3px; top: 534px; color: rgb(109, 109, 109); letter-spacing: -0.048px;">Adobe After Effect...</div><div class="t sz" style="right: 324.9px; top: 534px; color: rgb(109, 109, 109); letter-spacing: -0.696px;">967 KB</div>
<svg class="abs" style="left:476px;top:555px" width="14" height="11" viewBox="0 0 14 11"><rect x=".500" y=".500" width="13" height="10" fill="#fff" stroke="#a3a3a3"></rect><rect x="2" y="2" width="10" height="7" fill="#e4e9a8"></rect><rect x="6.500" y="2" width="5.500" height="3.500" fill="#9fd4f2"></rect><circle cx="3.900" cy="3.900" r="1.900" fill="#e4581f"></circle><path d="M4 9l2-4.500 2 4.500z" fill="#5a9c3a"></path><path d="M2 9l1.500-2.500 2 2.500z" fill="#7db44a"></path><ellipse cx="9" cy="4.500" rx="2" ry="1.600" fill="#6c6fd6"></ellipse><path d="M7 9l2.500-2 2.500 2z" fill="#c7d86a"></path></svg><div class="t" style="left: 495.2px; top: 555px; letter-spacing: -0.566px;">Flame 09</div><div class="t" style="left: 735.3px; top: 555px; color: rgb(109, 109, 109); letter-spacing: -0.346px;">05/12/2017 4:00 CH</div><div class="t" style="left: 855.3px; top: 555px; color: rgb(109, 109, 109); letter-spacing: -0.38px;">GIF image</div><div class="t sz" style="right: 324.9px; top: 555px; color: rgb(109, 109, 109); letter-spacing: -0.696px;">231 KB</div>
<svg class="abs" style="left:476px;top:574px" width="14" height="16" viewBox="0 0 14 16"><path d="M2.500.700h7.500l2.800 2.800v10.300l-1.500 1.500H2.500L1 13.800V2.200z" fill="#2c0b4f" stroke="#c58df5" stroke-width="1"></path><path d="M3.200 10.300l1.800-5.300 1.800 5.300M3.800 8.600h2.400" fill="none" stroke="#dfb0ff" stroke-width="1.250"></path><path d="M8 8h3c0-2.200-3-2.200-3 .200 0 2.300 2.200 2.300 3 1.400" fill="none" stroke="#dfb0ff" stroke-width="1.150"></path></svg><div class="t" style="left: 495.2px; top: 576px; letter-spacing: -0.566px;">Flame 10</div><div class="t" style="left: 735.3px; top: 576px; color: rgb(109, 109, 109); letter-spacing: -0.346px;">05/12/2017 4:01 CH</div><div class="t" style="left: 855.3px; top: 576px; color: rgb(109, 109, 109); letter-spacing: -0.048px;">Adobe After Effect...</div><div class="t sz" style="right: 324.9px; top: 576px; color: rgb(109, 109, 109); letter-spacing: -0.696px;">596 KB</div>
<svg class="abs" style="left:476px;top:597px" width="14" height="11" viewBox="0 0 14 11"><rect x=".500" y=".500" width="13" height="10" fill="#fff" stroke="#a3a3a3"></rect><rect x="2" y="2" width="10" height="7" fill="#e4e9a8"></rect><rect x="6.500" y="2" width="5.500" height="3.500" fill="#9fd4f2"></rect><circle cx="3.900" cy="3.900" r="1.900" fill="#e4581f"></circle><path d="M4 9l2-4.500 2 4.500z" fill="#5a9c3a"></path><path d="M2 9l1.500-2.500 2 2.500z" fill="#7db44a"></path><ellipse cx="9" cy="4.500" rx="2" ry="1.600" fill="#6c6fd6"></ellipse><path d="M7 9l2.500-2 2.500 2z" fill="#c7d86a"></path></svg><div class="t" style="left: 495.2px; top: 597px; letter-spacing: -0.566px;">Flame 10</div><div class="t" style="left: 735.3px; top: 597px; color: rgb(109, 109, 109); letter-spacing: -0.346px;">05/12/2017 4:00 CH</div><div class="t" style="left: 855.3px; top: 597px; color: rgb(109, 109, 109); letter-spacing: -0.38px;">GIF image</div><div class="t sz" style="right: 324.9px; top: 597px; color: rgb(109, 109, 109); letter-spacing: -0.696px;">281 KB</div>
<svg class="abs" style="left:476px;top:616px" width="14" height="16" viewBox="0 0 14 16"><path d="M2.500.700h7.500l2.800 2.800v10.300l-1.500 1.500H2.500L1 13.800V2.200z" fill="#2c0b4f" stroke="#c58df5" stroke-width="1"></path><path d="M3.200 10.300l1.800-5.300 1.800 5.300M3.800 8.600h2.400" fill="none" stroke="#dfb0ff" stroke-width="1.250"></path><path d="M8 8h3c0-2.200-3-2.200-3 .200 0 2.300 2.200 2.300 3 1.400" fill="none" stroke="#dfb0ff" stroke-width="1.150"></path></svg><div class="t" style="left: 495.2px; top: 618px; letter-spacing: -0.455px;">Flame 11</div><div class="t" style="left: 735.3px; top: 618px; color: rgb(109, 109, 109); letter-spacing: -0.346px;">05/12/2017 4:01 CH</div><div class="t" style="left: 855.3px; top: 618px; color: rgb(109, 109, 109); letter-spacing: -0.048px;">Adobe After Effect...</div><div class="t sz" style="right: 324.9px; top: 618px; color: rgb(109, 109, 109); letter-spacing: -0.696px;">824 KB</div>
<svg class="abs" style="left:476px;top:639px" width="14" height="11" viewBox="0 0 14 11"><rect x=".500" y=".500" width="13" height="10" fill="#fff" stroke="#a3a3a3"></rect><rect x="2" y="2" width="10" height="7" fill="#e4e9a8"></rect><rect x="6.500" y="2" width="5.500" height="3.500" fill="#9fd4f2"></rect><circle cx="3.900" cy="3.900" r="1.900" fill="#e4581f"></circle><path d="M4 9l2-4.500 2 4.500z" fill="#5a9c3a"></path><path d="M2 9l1.500-2.500 2 2.500z" fill="#7db44a"></path><ellipse cx="9" cy="4.500" rx="2" ry="1.600" fill="#6c6fd6"></ellipse><path d="M7 9l2.500-2 2.500 2z" fill="#c7d86a"></path></svg><div class="t" style="left: 495.2px; top: 639px; letter-spacing: -0.455px;">Flame 11</div><div class="t" style="left: 735.3px; top: 639px; color: rgb(109, 109, 109); letter-spacing: -0.346px;">05/12/2017 4:00 CH</div><div class="t" style="left: 855.3px; top: 639px; color: rgb(109, 109, 109); letter-spacing: -0.38px;">GIF image</div><div class="t sz" style="right: 324.9px; top: 639px; color: rgb(109, 109, 109); letter-spacing: -0.696px;">465 KB</div>
<svg class="abs" style="left:476px;top:658px" width="14" height="16" viewBox="0 0 14 16"><path d="M2.500.700h7.500l2.800 2.800v10.300l-1.500 1.500H2.500L1 13.800V2.200z" fill="#2c0b4f" stroke="#c58df5" stroke-width="1"></path><path d="M3.200 10.300l1.800-5.300 1.800 5.300M3.800 8.600h2.400" fill="none" stroke="#dfb0ff" stroke-width="1.250"></path><path d="M8 8h3c0-2.200-3-2.200-3 .200 0 2.300 2.200 2.300 3 1.400" fill="none" stroke="#dfb0ff" stroke-width="1.150"></path></svg><div class="t" style="left: 495.2px; top: 660px; letter-spacing: -0.566px;">Flame 12</div><div class="t" style="left: 735.3px; top: 660px; color: rgb(109, 109, 109); letter-spacing: -0.346px;">05/12/2017 4:01 CH</div><div class="t" style="left: 855.3px; top: 660px; color: rgb(109, 109, 109); letter-spacing: -0.048px;">Adobe After Effect...</div><div class="t sz" style="right: 324.9px; top: 660px; color: rgb(109, 109, 109); letter-spacing: -0.696px;">443 KB</div>


 <div class="t" style="left: 311px; top: 680px; color: rgb(51, 51, 51); letter-spacing: -0.17px;">41 items</div>
 <div class="t" style="left: 376px; top: 680px; color: rgb(51, 51, 51); letter-spacing: -0.148px;">1 item selected</div>
 <div class="t" style="left: 461.4px; top: 680px; color: rgb(51, 51, 51); letter-spacing: -0.664px;">117 KB</div>
 <div class="abs" style="left:365px;top:679px;width:1px;height:16px;background:#e8e8e8"></div>
 <div class="abs" style="left:506px;top:679px;width:1px;height:16px;background:#e8e8e8"></div>

</div></div>

<!-- TASKBAR -->
<div id="tb"><div class="abs" style="left:0;top:-728px;width:1366px;height:768px">
 <div class="abs" style="left:245px;top:728px;width:48px;height:38px;background:#313135"></div>
 <div class="abs" style="left:200px;top:766px;width:40px;height:2px;background:#76b9ed"></div>
 <div class="abs" style="left:245px;top:766px;width:48px;height:2px;background:#76b9ed"></div>
 <div class="abs" style="left:298px;top:766px;width:40px;height:2px;background:#76b9ed"></div>
 <!-- start -->
 <svg class="abs" style="left:15px;top:739px" width="18" height="18" viewBox="0 0 18 18"><path d="M.800 2.700L7 1.800v6.500H.800zM7.900 1.700L17.300.300v8H7.900zM.800 9.200H7v6.500L.800 14.800zM7.900 9.200h9.400v8L7.900 15.800z" fill="#fff"></path></svg>
 <!-- search -->
 <svg class="abs" style="left:62px;top:738px" width="20" height="20" viewBox="0 0 20 20"><circle cx="12.400" cy="7.700" r="5" fill="none" stroke="#fff" stroke-width="1.200"></circle><path d="M8.800 11.300L2.300 17.700" stroke="#fff" stroke-width="1.300" fill="none"></path></svg>
 <!-- task view -->
 <svg class="abs" style="left:109px;top:739px" width="22" height="18" viewBox="0 0 22 18"><g fill="none" stroke="#fff" stroke-width="1.100"><rect x="5.500" y="2.500" width="11" height="13"></rect><path d="M3.500 4.500h-2v9h2M18.500 4.500h2v9h-2"></path></g></svg>
 <!-- computer -->
 <svg class="abs" style="left:158px;top:735px" width="26" height="25" viewBox="0 0 26 25"><defs><linearGradient id="cm" x1="0" y1="0" x2="1" y2="1"><stop offset="0" stop-color="#6fd0ff"></stop><stop offset="1" stop-color="#1d9bea"></stop></linearGradient></defs><path d="M8.500 1.500l15.500 5.500v11L8.500 14z" fill="url(#cm)"></path><path d="M8.500 1.500l-.8.600V14.500l.800-.500z" fill="#d8eefc"></path><path d="M14 16.500l5.500 1.800v1.500l-5.500-1.500z" fill="#cfd6dc"></path><path d="M1.500 18.500l6-2 11.500 4-5.500 3z" fill="#e4e8ec"></path><path d="M4 18.700l3.500-1.200 9 3.200-3 1.600z" fill="#aeb6bd"></path></svg>
 <!-- chrome -->
 <svg class="abs" style="left:208px;top:736px" width="24" height="24" viewBox="0 0 24 24"><g transform="translate(12 12)">
  <path d="M0 -5.300L9.980 -5.300A11.300 11.300 0 0 0 -9.580 -5.990L-4.590 2.650L0 0Z" fill="#dd4b3e"></path>
  <path d="M4.590 2.650L-.400 11.290A11.300 11.300 0 0 0 9.980 -5.300L0 -5.300L0 0Z" fill="#ffcd42"></path>
  <path d="M-4.590 2.650L-9.580 -5.990A11.300 11.300 0 0 0 -.400 11.290L4.590 2.650L0 0Z" fill="#1da462"></path>
  <circle r="5.300" fill="#fff"></circle><circle r="4.200" fill="#4c8bf5"></circle></g></svg>
 <!-- explorer -->
 <svg class="abs" style="left:257px;top:737px" width="24" height="21" viewBox="0 0 24 21"><path d="M1 2.500h8l1.500 1.500H22.500v15.500H1z" fill="#f5d27a"></path><path d="M1.800 3.300h6.500v1H1.800z" fill="#fff3c4"></path><path d="M1 5.500h21.500v14H1z" fill="#ffe699"></path><path d="M5.500 12.500h12.500v7h-3.500v-3.500h-5.500v3.500H5.500z" fill="#35a7e6"></path><path d="M5.500 12.500h12.500v1.500H5.500z" fill="#2b8fd0"></path></svg>
 <!-- ie -->
 <svg class="abs" style="left:305px;top:734px" width="26" height="26" viewBox="0 0 26 26"><defs><linearGradient id="ieb" x1="0" y1="0" x2="0" y2="1"><stop offset="0" stop-color="#8be0ff"></stop><stop offset=".5" stop-color="#3db4f0"></stop><stop offset="1" stop-color="#1590da"></stop></linearGradient></defs>
  <path d="M21 14.200A7.200 7.200 0 1 0 19.300 19.200" fill="none" stroke="url(#ieb)" stroke-width="4.400"></path><path d="M7.500 14.300h16" stroke="#35aaec" stroke-width="3.400" fill="none"></path>
  <path d="M3.800 23.500C-.800 19.500 6 8.500 15 4.200 21 1.400 25.300 2.400 24.700 6.200c-.200 1.200-.800 2.400-1.500 3.500" fill="none" stroke="#f4b71c" stroke-width="2"></path></svg>
 <!-- tray -->
 <svg class="abs" style="left:1116px;top:740px" width="92" height="17" viewBox="0 0 92 17"><g fill="none" stroke="#fff" stroke-width="1.100">
  <path d="M1.500 11l5.700-5.700 5.700 5.700"></path>
  <path d="M28 5.500h10.500v7.500H28"></path><path d="M38.500 7.500h1.200v3.500h-1.200"></path><path d="M31 7l4 4.500M35 7l-4 4.500" stroke-width="1"></path>
  <path d="M24.500 2v3M27.500 2v3M23.500 5h5v2.500c0 1.500-1 2.300-2.500 2.300s-2.500-.8-2.500-2.300zM26 10v4"></path>
  <path d="M51 15c0-6 5-11.500 11.500-11.500" opacity=".9"></path><path d="M54 15c0-4.500 3.700-8.500 8.500-8.500"></path><path d="M57 15c0-3 2.500-5.500 5.500-5.500"></path><path d="M60 15c0-1.500 1.200-2.600 2.500-2.600"></path>
  <path d="M71.500 6.500h2.500l3.500-3.500v11l-3.500-3.500h-2.500z"></path><path d="M80 6c1.300 1.300 1.300 4 0 5.300"></path><path d="M82.500 4c2.300 2.500 2.300 6.800 0 9.300" opacity=".6"></path><path d="M85 2.200c3.200 3.500 3.200 9.400 0 12.900" opacity=".4"></path>
 </g><circle cx="61.500" cy="14" r="1.300" fill="#fff"></circle></svg>
 <div class="t" style="left: 1213.4px; top: 741px; color: rgb(255, 255, 255); letter-spacing: -1.205px;">ENG</div>
 <div class="t" style="left: 1256.7px; top: 732px; color: rgb(255, 255, 255); letter-spacing: -0.797px;">10:15 SA</div>
 <div class="t" style="left: 1249.9px; top: 749.5px; color: rgb(255, 255, 255); letter-spacing: -0.306px;">19/02/2019</div>
 <svg class="abs" style="left:1324px;top:739px" width="19" height="18" viewBox="0 0 19 18"><path d="M1.500 1.500h16v11h-5.500l-2.500 3-2.500-3H1.500z" fill="none" stroke="#fff" stroke-width="1.100"></path></svg>
 <div class="abs" style="left:1361px;top:728px;width:1px;height:40px;background:#4c4f55"></div>
</div></div>


</body></html>
